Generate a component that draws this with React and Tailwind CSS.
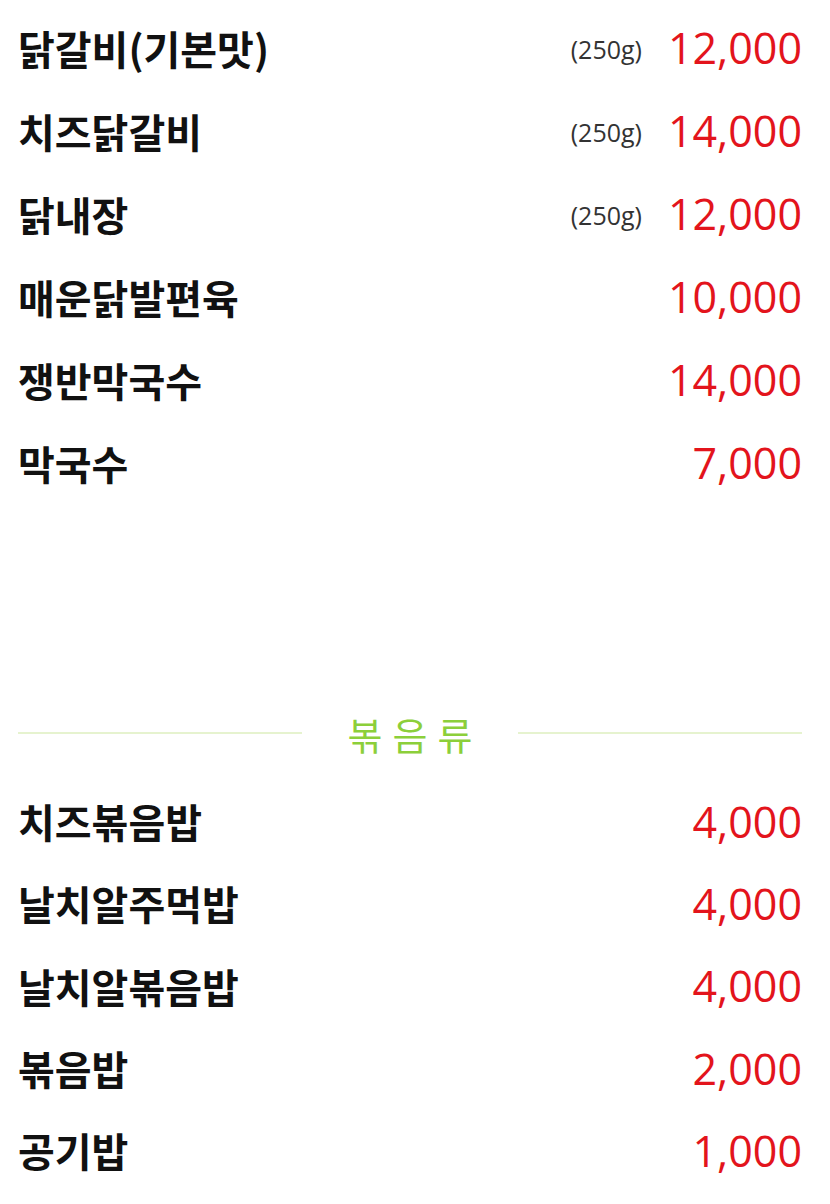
import React from 'react';

const mainMenu = [
  { name: '닭갈비(기본맛)', weight: '(250g)', price: '12,000' },
  { name: '치즈닭갈비', weight: '(250g)', price: '14,000' },
  { name: '닭내장', weight: '(250g)', price: '12,000' },
  { name: '매운닭발편육', price: '10,000' },
  { name: '쟁반막국수', price: '14,000' },
  { name: '막국수', price: '7,000' },
];

const riceMenu = [
  { name: '치즈볶음밥', price: '4,000' },
  { name: '날치알주먹밥', price: '4,000' },
  { name: '날치알볶음밥', price: '4,000' },
  { name: '볶음밥', price: '2,000' },
  { name: '공기밥', price: '1,000' },
];

const MenuRow = ({ item, height }) => (
  <li className={`flex items-center justify-between ${height}`}>
    <span className="font-['Noto_Sans_CJK_KR',sans-serif] text-[40px] font-bold text-[#111]">
      {item.name}
    </span>
    <span className="flex items-center">
      {item.weight && (
        <span className="mr-[26px] mt-[4px] font-['Open_Sans',sans-serif] text-[25px] text-[#333]">
          {item.weight}
        </span>
      )}
      <span className="font-['Open_Sans',sans-serif] text-[43px] leading-none text-[#e3141c]">
        {item.price}
      </span>
    </span>
  </li>
);

export default function App() {
  return (
    <div className="min-h-[1204px] w-[830px] bg-white pl-[18px] pr-[28px] pt-[6px]">
      <ul>
        {mainMenu.map((item) => (
          <MenuRow key={item.name} item={item} height="h-[83px]" />
        ))}
      </ul>

      <div className="mt-[199px] flex h-[60px] items-center">
        <div className="h-[2px] flex-1 bg-[#e6f3cf]" />
        <span className="pl-[46px] pr-[36px] font-['Noto_Sans_CJK_KR',sans-serif] text-[38px] tracking-[10px] text-[#8ccf3a]">
          볶음류
        </span>
        <div className="h-[2px] flex-1 bg-[#e6f3cf]" />
      </div>

      <ul className="mt-[17px]">
        {riceMenu.map((item) => (
          <MenuRow key={item.name} item={item} height="h-[82.3px]" />
        ))}
      </ul>
    </div>
  );
}
